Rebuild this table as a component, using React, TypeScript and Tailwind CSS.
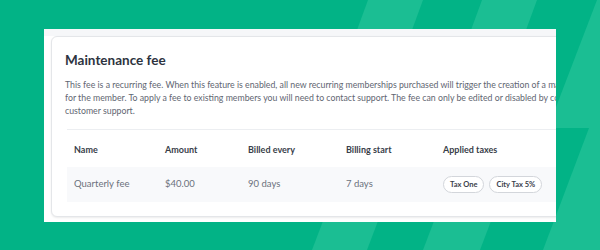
import React from "react";

const font = { fontFamily: "Lato, 'Open Sans', sans-serif" };

function Background() {
  return (
    <svg className="absolute inset-0" width="600" height="250" viewBox="0 0 600 250">
      <rect width="600" height="250" fill="#02b386" />
      <g fill="#1bbe93">
        <polygon points="368,0 423,0 412,30 357,30" />
        <polygon points="482,0 537,0 526,30 471,30" />
        <polygon points="597,0 700,0 700,128 548,128" />
        <polygon points="589,128 660,128 660,250 543,250" />
        <polygon points="331,200 386,200 367,250 312,250" />
        <polygon points="442,200 499,200 480,250 423,250" />
      </g>
    </svg>
  );
}

function Badge({ children }: { children: React.ReactNode }) {
  return (
    <span className="inline-flex h-[17px] items-center rounded-full border border-[#d3d6db] bg-white px-[6px] text-[7.5px] font-bold text-[#3b414c]">
      {children}
    </span>
  );
}

export default function App() {
  return (
    <div className="relative h-[250px] w-[600px] overflow-hidden" style={font}>
      <Background />
      <div className="relative pl-[44px] pt-[29px]">
        <div className="h-[193px] w-[512px] overflow-hidden bg-white">
          <div className="h-[7px] bg-[#f6f7f9]" />
          <div className="pl-[7px]">
            <div className="w-[600px] rounded-[6px] border border-[#e4e6e9] bg-white pb-[14px] pl-[13px] pt-[14px] shadow-[0_1px_2px_rgba(0,0,0,0.08)]">
              <div className="text-[13.5px] font-bold leading-[18px] text-[#2d3340]">Maintenance fee</div>
              <div className="mt-[9px] text-[8.75px] leading-[13px] text-[#5f6672]">
                <div className="whitespace-nowrap">
                  This fee is a recurring fee. When this feature is enabled, all new recurring memberships purchased will trigger the creation of a maintenance fee
                </div>
                <div className="whitespace-nowrap">
                  for the member. To apply a fee to existing members you will need to contact support. The fee can only be edited or disabled by contacting
                </div>
                <div className="whitespace-nowrap">customer support.</div>
              </div>
              <div className="ml-[2px] mt-[12px] border-t border-[#eceef1]">
                <div className="grid h-[37px] grid-cols-[91px_83px_98px_97px_1fr] items-center pl-[7px] pt-[2px] text-[9px] font-bold text-[#383e49]">
                  <div>Name</div>
                  <div>Amount</div>
                  <div>Billed every</div>
                  <div>Billing start</div>
                  <div>Applied taxes</div>
                </div>
                <div className="grid h-[35px] grid-cols-[91px_83px_98px_97px_1fr] items-center bg-[#f8f9fb] pl-[7px] text-[9.5px] text-[#6b717c]">
                  <div>Quarterly fee</div>
                  <div>$40.00</div>
                  <div>90 days</div>
                  <div>7 days</div>
                  <div className="flex gap-[5px]">
                    <Badge>Tax One</Badge>
                    <Badge>City Tax 5%</Badge>
                  </div>
                </div>
              </div>
            </div>
          </div>
        </div>
      </div>
    </div>
  );
}
